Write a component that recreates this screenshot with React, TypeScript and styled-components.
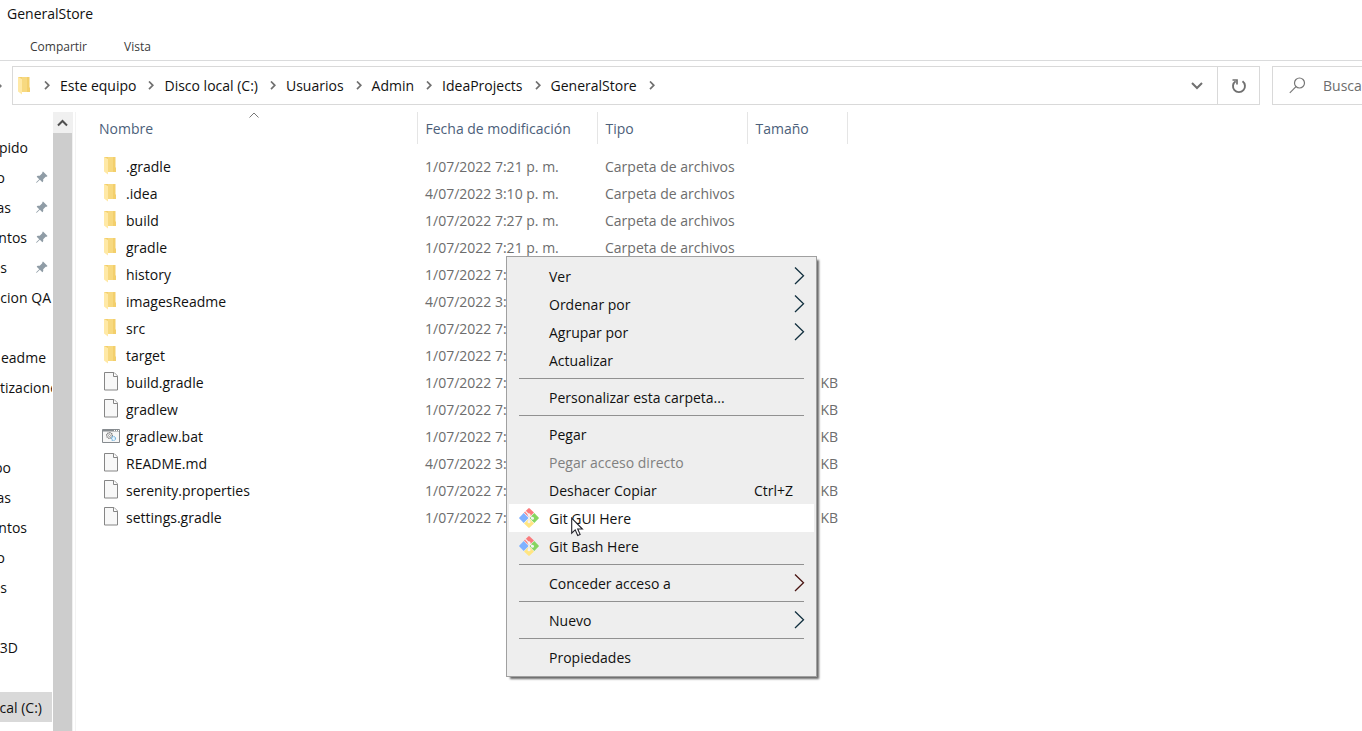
import React from "react";
import styled, { createGlobalStyle } from "styled-components";
import { BsPinAngleFill } from "react-icons/bs";

const GlobalStyle = createGlobalStyle`
  * { box-sizing: border-box; }
  body {
    margin: 0;
    background: #fff;
    color: #111;
    font-family: "Open Sans", "Noto Sans", sans-serif;
    font-size: 14px;
    line-height: 20px;
    overflow: hidden;
  }
  button, input { font: inherit; color: inherit; }
  ul, ol { list-style: none; margin: 0; padding: 0; }
`;

const Window = styled.div`
  display: flex;
  flex-direction: column;
  height: 100vh;
`;

const Title = styled.h1`
  margin: 0;
  padding: 4px 7px;
  height: 32px;
  font-size: 14px;
  font-weight: 400;
  line-height: 20px;
`;

const Ribbon = styled.nav`
  display: flex;
  gap: 37px;
  height: 29px;
  padding-left: 30px;
  border-bottom: 1px solid #dadbdc;
`;

const RibbonTab = styled.button`
  border: 0;
  padding: 0;
  height: 28px;
  background: none;
  font-size: 12px;
  line-height: 30px;
  color: #3b3b3b;
`;

const Toolbar = styled.div`
  display: flex;
  align-items: flex-start;
  height: 51px;
  padding-top: 5px;
`;

const NavRemnant = styled.span`
  flex: none;
  width: 12px;
  height: 39px;
  display: flex;
  align-items: center;
`;

const AddressBar = styled.div`
  flex: 1;
  display: flex;
  align-items: center;
  height: 39px;
  padding-left: 4px;
  border: 1px solid #d9d9d9;
  white-space: nowrap;
`;

const Crumbs = styled.ol`
  flex: 1;
  display: flex;
  align-items: center;
  gap: 10px;
  padding-left: 11px;
`;

const Crumb = styled.li`
  display: flex;
  align-items: center;
`;

const CrumbButton = styled.button`
  border: 0;
  padding: 0 12px 0 0;
  background: none;
`;

const BarButton = styled.button<{ $divided?: boolean }>`
  display: flex;
  align-items: center;
  justify-content: center;
  width: ${(p) => (p.$divided ? 42 : 40)}px;
  height: 37px;
  padding: 0;
  border: 0;
  border-left: ${(p) => (p.$divided ? "1px solid #d9d9d9" : "0")};
  background: none;
`;

const Search = styled.label`
  flex: none;
  display: flex;
  align-items: center;
  gap: 17px;
  width: 90px;
  height: 39px;
  margin-left: 12px;
  padding-left: 16px;
  border: 1px solid #d9d9d9;
  border-right: 0;
`;

const SearchInput = styled.input`
  flex: 1;
  min-width: 0;
  padding: 0;
  border: 0;
  outline: 0;
  background: none;
  &::placeholder { color: #6d6d6d; opacity: 1; }
`;

const Body = styled.div`
  flex: 1;
  display: flex;
  min-height: 0;
`;

const Tree = styled.nav`
  flex: none;
  display: flex;
  flex-direction: column;
  gap: 20px;
  width: 53px;
  padding: 20px 1px 0 0;
  overflow: hidden;
`;

const TreeRow = styled.li<{ $selected?: boolean }>`
  display: flex;
  align-items: center;
  justify-content: space-between;
  height: 30px;
  padding-right: 4px;
  overflow: hidden;
  background: ${(p) => (p.$selected ? "#d9d9d9" : "transparent")};
`;

const TreeLabel = styled.a<{ $w: number }>`
  flex: none;
  display: flex;
  justify-content: flex-end;
  width: ${(p) => p.$w}px;
  color: #111;
  line-height: 22px;
  padding-top: 2px;
  text-decoration: none;
  white-space: nowrap;
`;

const ScrollTrack = styled.div`
  flex: none;
  display: flex;
  flex-direction: column;
  width: 20px;
  background: #f0f0f0;
`;

const ScrollArrow = styled.button`
  display: flex;
  align-items: center;
  justify-content: center;
  width: 19px;
  height: 21px;
  padding: 0;
  border: 0;
  background: none;
`;

const ScrollThumb = styled.div`
  flex: 1;
  width: 19px;
  background: #cdcdcd;
`;

const Pane = styled.main`
  flex: 1;
  min-width: 0;
  margin-left: 2px;
  padding-left: 15px;
  border-left: 1px solid #f3f3f3;
`;

const Files = styled.table`
  width: 756px;
  table-layout: fixed;
  border-collapse: collapse;
  td, th { padding: 0 0 0 8px; text-align: left; font-weight: 400; white-space: nowrap; }
`;

const Col = styled.col<{ $w: number }>`
  width: ${(p) => p.$w}px;
`;

const HeadCell = styled.th`
  position: relative;
  height: 32px;
  color: #4c607a;
  border-right: 1px solid #e5e5e5;
  && { padding-top: 2px; }
`;

const SortMark = styled.svg`
  position: absolute;
  top: 0;
  left: 50%;
  margin-left: -5px;
`;

const Spacer = styled.tbody`
  height: 9px;
`;

const FileRow = styled.tr`
  height: 27px;
  color: #6d6d6d;
`;

const FileName = styled.div`
  display: flex;
  align-items: center;
  gap: 3px;
  color: #111;
`;

const IconSlot = styled.span`
  display: flex;
  align-items: center;
  justify-content: center;
  width: 24px;
  height: 24px;
  padding-bottom: 2px;
`;

const SizeCell = styled.td`
  && { text-align: right; padding-right: 9px; }
`;

const Menu = styled.div`
  position: absolute;
  top: 256px;
  left: 506px;
  width: 311px;
  padding: 5px 2px;
  background: #eeeeee;
  border: 1px solid #a0a0a0;
  box-shadow: 3px 3px 2px -1px rgba(0, 0, 0, 0.6);
`;

const MenuItem = styled.button<{ $hover?: boolean }>`
  display: flex;
  align-items: center;
  width: 100%;
  height: 28px;
  padding: 0 9px 0 10px;
  border: 0;
  background: ${(p) => (p.$hover ? "#fff" : "transparent")};
  text-align: left;
  &:disabled { color: #808080; }
`;

const MenuIcon = styled.span`
  display: flex;
  width: 30px;
`;

const MenuText = styled.span`
  flex: 1;
  padding-top: 2px;
`;

const Shortcut = styled.span`
  padding: 2px 12px 0 0;
`;

const Separator = styled.hr`
  height: 1px;
  margin: 4px 10px;
  border: 0;
  background: #919191;
`;

const Pointer = styled.svg`
  position: absolute;
  top: 260px;
  left: 64px;
  pointer-events: none;
`;

const Folder = () => (
  <svg width="16" height="18" viewBox="0 0 16 18" aria-hidden="true">
    <path d="M1 0h11.500v10l.5 1v4H4z" fill="#f3cf6c" />
    <path d="M5 0h5v15H5z" fill="#f7d980" />
    <path d="M1 0l4 2v15.500L1 14.500z" fill="#ffe9a6" />
  </svg>
);

const Doc = () => (
  <svg width="16" height="19" viewBox="0 0 16 19" aria-hidden="true">
    <path d="M1.500 .5h9.500l3.500 3.500v14h-13z" fill="#f8f8f8" stroke="#868686" />
    <path d="M10.500 .5v4h4" fill="#fff" stroke="#868686" />
  </svg>
);

const Batch = () => (
  <svg width="18" height="14" viewBox="0 0 18 14" aria-hidden="true">
    <path d="M.5.5h17v13H.5z" fill="#f7f7f7" stroke="#868b8f" />
    <path d="M1 1.500h16" stroke="#868b8f" strokeWidth="2" />
    <path d="M12 1.500h1M14 1.500h1M16 1.500h1" stroke="#fff" />
    <circle cx="7.500" cy="6.500" r="2.800" fill="#fff" stroke="#777" strokeWidth="1.400" strokeDasharray="1.400 .7" />
    <circle cx="7.500" cy="6.500" r="1" fill="none" stroke="#888" strokeWidth=".8" />
    <circle cx="11.500" cy="9.500" r="2" fill="#e9f6ff" stroke="#76b4de" strokeWidth="1.200" strokeDasharray="1.200 .5" />
  </svg>
);

const Chevron = () => (
  <svg width="6" height="10" viewBox="0 0 6 10" aria-hidden="true">
    <path d="M1 .5l3.800 3.800L1 8.100" fill="none" stroke="#707070" strokeWidth="1.700" />
  </svg>
);

const SubArrow = ({ color }: { color: string }) => (
  <svg width="11" height="18" viewBox="0 0 11 18" aria-hidden="true">
    <path d="M1 .5l8.500 8.300L1 17" fill="none" stroke={color} strokeWidth="1.300" />
  </svg>
);

const GitMark = () => (
  <svg width="20" height="20" viewBox="0 0 20 20" aria-hidden="true">
    <path d="M5 4.600l4.300-4.200q.7-.6 1.400 0L15 4.600l-5 5z" fill="#fa7a7c" />
    <path d="M4.700 5.100L9.600 10l-4.900 4.900L.4 10.600q-.5-.6 0-1.200z" fill="#7fb1ff" />
    <path d="M15.300 5.100l4.300 4.300q.5.600 0 1.200l-4.300 4.300-4.900-4.900z" fill="#86d55f" />
    <path d="M10 10.400l5 5-4.300 4.200q-.7.600-1.400 0L5 15.400z" fill="#ffe582" />
    <path d="M6.400 3.300L10 6.900V13.500M10 7l3.500 3.400" fill="none" stroke="#f3f3f3" strokeWidth="1.300" />
    <circle cx="10" cy="6.800" r="1.500" fill="#f3f3f3" />
    <circle cx="10" cy="13.700" r="1.500" fill="#f3f3f3" />
    <circle cx="13.500" cy="10.300" r="1.500" fill="#f3f3f3" />
  </svg>
);

type Place = { text: string; w: number; pin?: boolean; selected?: boolean };

const places: Place[][] = [
  [
    { text: "pido", w: 28 },
    { text: "o", w: 5, pin: true },
    { text: "as", w: 11, pin: true },
    { text: "ntos", w: 27, pin: true },
    { text: "es", w: 7, pin: true },
    { text: "cion QA", w: 51 },
    { text: "", w: 0 },
    { text: "eadme", w: 46 },
    { text: "tizacione", w: 58 },
    { text: "", w: 0 },
  ],
  [
    { text: "po", w: 11 },
    { text: "as", w: 11 },
    { text: "ntos", w: 27 },
    { text: "o", w: 5 },
    { text: "es", w: 7 },
    { text: "", w: 0 },
    { text: "3D", w: 18 },
    { text: "", w: 0 },
    { text: "cal (C:)", w: 42, selected: true },
  ],
];

const crumbs = ["Este equipo", "Disco local (C:)", "Usuarios", "Admin", "IdeaProjects", "GeneralStore"];

type Kind = "folder" | "doc" | "batch";

const icons: Record<Kind, React.ReactNode> = { folder: <Folder />, doc: <Doc />, batch: <Batch /> };

type FileEntry = { kind: Kind; name: string; date: string; type?: string; size?: string };

const files: FileEntry[] = [
  { kind: "folder", name: ".gradle", date: "1/07/2022 7:21 p. m.", type: "Carpeta de archivos" },
  { kind: "folder", name: ".idea", date: "4/07/2022 3:10 p. m.", type: "Carpeta de archivos" },
  { kind: "folder", name: "build", date: "1/07/2022 7:27 p. m.", type: "Carpeta de archivos" },
  { kind: "folder", name: "gradle", date: "1/07/2022 7:21 p. m.", type: "Carpeta de archivos" },
  { kind: "folder", name: "history", date: "1/07/2022 7:21" },
  { kind: "folder", name: "imagesReadme", date: "4/07/2022 3:10" },
  { kind: "folder", name: "src", date: "1/07/2022 7:21" },
  { kind: "folder", name: "target", date: "1/07/2022 7:21" },
  { kind: "doc", name: "build.gradle", date: "1/07/2022 7:21", size: "KB" },
  { kind: "doc", name: "gradlew", date: "1/07/2022 7:21", size: "KB" },
  { kind: "batch", name: "gradlew.bat", date: "1/07/2022 7:21", size: "KB" },
  { kind: "doc", name: "README.md", date: "4/07/2022 3:10", size: "KB" },
  { kind: "doc", name: "serenity.properties", date: "1/07/2022 7:21", size: "KB" },
  { kind: "doc", name: "settings.gradle", date: "1/07/2022 7:21", size: "KB" },
];

type Entry = { text: string; arrow?: string; off?: boolean; keys?: string; git?: boolean; hover?: boolean };

const menu: Entry[][] = [
  [
    { text: "Ver", arrow: "#12303f" },
    { text: "Ordenar por", arrow: "#12303f" },
    { text: "Agrupar por", arrow: "#12303f" },
    { text: "Actualizar" },
  ],
  [{ text: "Personalizar esta carpeta..." }],
  [
    { text: "Pegar" },
    { text: "Pegar acceso directo", off: true },
    { text: "Deshacer Copiar", keys: "Ctrl+Z" },
    { text: "Git GUI Here", git: true, hover: true },
    { text: "Git Bash Here", git: true },
  ],
  [{ text: "Conceder acceso a", arrow: "#4a1512" }],
  [{ text: "Nuevo", arrow: "#12303f" }],
  [{ text: "Propiedades" }],
];

export default function App() {
  return (
    <Window>
      <GlobalStyle />
      <Title>GeneralStore</Title>
      <Ribbon>
        <RibbonTab>Compartir</RibbonTab>
        <RibbonTab>Vista</RibbonTab>
      </Ribbon>
      <Toolbar>
        <NavRemnant>
          <svg width="2" height="4" viewBox="0 0 2 4" aria-hidden="true">
            <path d="M0 0l2 2-2 2z" fill="#777" />
          </svg>
        </NavRemnant>
        <AddressBar>
          <Folder />
          <Crumbs>
            <Chevron />
            {crumbs.map((name) => (
              <Crumb key={name}>
                <CrumbButton>{name}</CrumbButton>
                <Chevron />
              </Crumb>
            ))}
          </Crumbs>
          <BarButton aria-label="Ubicaciones anteriores">
            <svg width="12" height="8" viewBox="0 0 12 8" aria-hidden="true">
              <path d="M1 1l5 5 5-5" fill="none" stroke="#707070" strokeWidth="2" />
            </svg>
          </BarButton>
          <BarButton $divided aria-label="Actualizar">
            <svg width="16" height="16" viewBox="0 0 16 16" aria-hidden="true">
              <path d="M11.500 3.300A6 6 0 1 1 4.600 3.200" fill="none" stroke="#707070" strokeWidth="1.900" />
              <path d="M1.500 2h4.500v4.500" fill="none" stroke="#707070" strokeWidth="1.700" />
            </svg>
          </BarButton>
        </AddressBar>
        <Search>
          <svg width="17" height="17" viewBox="0 0 17 17" aria-hidden="true">
            <circle cx="10.500" cy="6" r="5" fill="none" stroke="#777" strokeWidth="1.200" />
            <path d="M7 9.600L.8 15.800" stroke="#777" strokeWidth="1.200" />
          </svg>
          <SearchInput aria-label="Buscar" placeholder="Busca" />
        </Search>
      </Toolbar>
      <Body>
        <Tree>
          {places.map((group, g) => (
            <ul key={g}>
              {group.map((p, i) => (
                <TreeRow key={i} $selected={p.selected}>
                  {p.text && (
                    <TreeLabel href="#" $w={p.w}>
                      {p.text}
                    </TreeLabel>
                  )}
                  {p.pin && <BsPinAngleFill size={13} color="#8f9ca6" />}
                </TreeRow>
              ))}
            </ul>
          ))}
        </Tree>
        <ScrollTrack>
          <ScrollArrow aria-label="Subir">
            <svg width="11" height="8" viewBox="0 0 11 8" aria-hidden="true">
              <path d="M1 6.500l4.500-4.500L10 6.500" fill="none" stroke="#505050" strokeWidth="2" />
            </svg>
          </ScrollArrow>
          <ScrollThumb />
        </ScrollTrack>
        <Pane>
          <Files>
            <colgroup>
              <Col $w={326} />
              <Col $w={180} />
              <Col $w={150} />
              <Col $w={100} />
            </colgroup>
            <thead>
              <tr>
                <HeadCell>
                  Nombre
                  <SortMark width="10" height="6" viewBox="0 0 10 6" aria-hidden="true">
                    <path d="M.5 5.500L5 1l4.500 4.500" fill="none" stroke="#777" />
                  </SortMark>
                </HeadCell>
                <HeadCell>Fecha de modificación</HeadCell>
                <HeadCell>Tipo</HeadCell>
                <HeadCell>Tamaño</HeadCell>
              </tr>
            </thead>
            <Spacer>
              <tr>
                <td colSpan={4} />
              </tr>
            </Spacer>
            <tbody>
              {files.map((f) => (
                <FileRow key={f.name}>
                  <td>
                    <FileName>
                      <IconSlot>{icons[f.kind]}</IconSlot>
                      {f.name}
                    </FileName>
                  </td>
                  <td>{f.date}</td>
                  <td>{f.type}</td>
                  <SizeCell>{f.size}</SizeCell>
                </FileRow>
              ))}
            </tbody>
          </Files>
        </Pane>
      </Body>
      <Menu role="menu">
        {menu.map((group, g) => (
          <React.Fragment key={g}>
            {g > 0 && <Separator />}
            {group.map((e) => (
              <MenuItem key={e.text} role="menuitem" disabled={e.off} $hover={e.hover}>
                <MenuIcon>{e.git && <GitMark />}</MenuIcon>
                <MenuText>{e.text}</MenuText>
                {e.keys && <Shortcut>{e.keys}</Shortcut>}
                {e.arrow && <SubArrow color={e.arrow} />}
              </MenuItem>
            ))}
          </React.Fragment>
        ))}
        <Pointer width="13" height="20" viewBox="0 0 13 20" aria-hidden="true">
          <path
            d="M.7 1.200v15l3.500-3.300 2.500 5.600 2.400-1.100-2.400-5.400h4.700z"
            fill="#fff"
            stroke="#22222a"
            strokeWidth="1.100"
          />
        </Pointer>
      </Menu>
    </Window>
  );
}
